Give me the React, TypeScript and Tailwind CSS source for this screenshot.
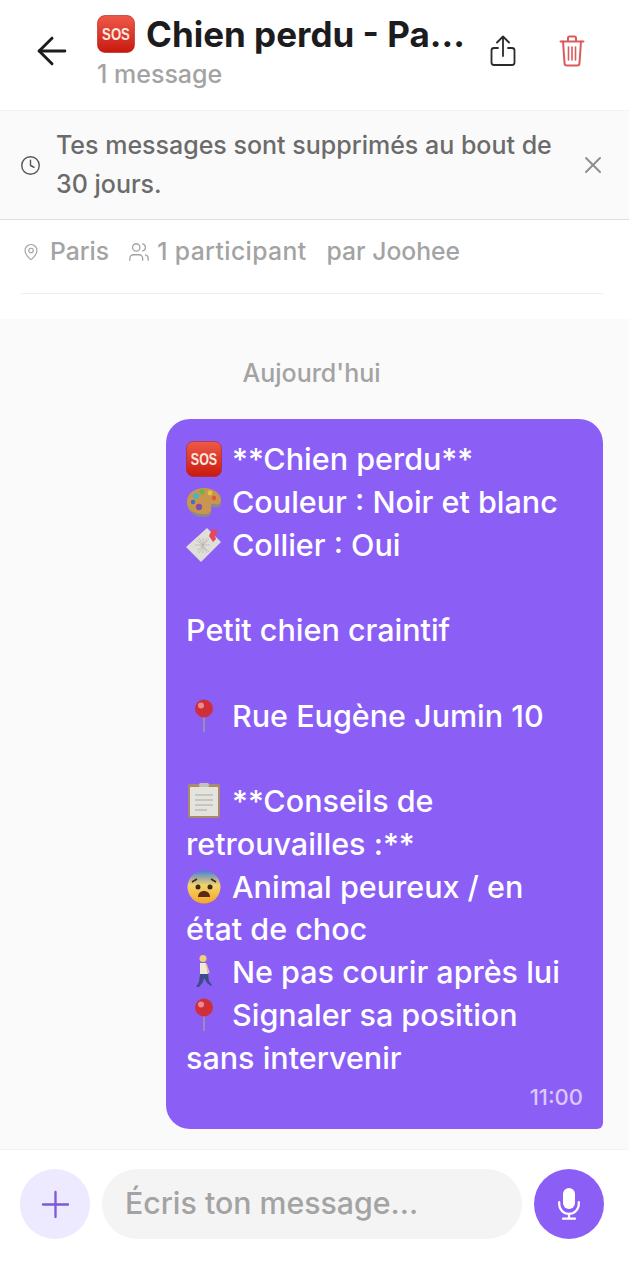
import { ArrowLeft, Clock, MapPin, Plus, Users, X } from 'lucide-react'

const font = { fontFamily: 'Inter, sans-serif' }

function SosEmoji({ size = 36, id }: { size?: number; id: string }) {
  return (
    <svg width={size} height={size} viewBox="0 0 36 36" className="shrink-0">
      <defs>
        <linearGradient id={id} x1="0" y1="0" x2="0" y2="1">
          <stop offset="0" stopColor="#ee5a48" />
          <stop offset="1" stopColor="#c8190f" />
        </linearGradient>
      </defs>
      <rect x="0.5" y="0.5" width="35" height="35" rx="7" fill={`url(#${id})`} stroke="#b3201a" strokeWidth="0.6" />
      <text transform="translate(18 24) scale(0.78 1)" textAnchor="middle" fontSize="16" fontWeight="700" fill="#fde7df" fontFamily="Liberation Sans, sans-serif">SOS</text>
    </svg>
  )
}

function PaletteEmoji() {
  return (
    <svg width="36" height="36" viewBox="0 0 36 36" className="shrink-0">
      <path d="M1 20C1 11 9 6 18 6c9 0 17 5 17 13 0 4-3 5-6 4-3-1-5 1-4 4 1 3-2 6-7 6C9 33 1 28 1 20z" fill="#8d8a86" />
      <path d="M1 18C1 9 9 4 18 4c9 0 17 5 17 12 0 4-3 5-6 4-3-1-5 1-4 4 1 3-2 6-7 6C9 30 1 26 1 18z" fill="#c9964f" />
      <circle cx="10" cy="12" r="3" fill="#49b4c8" />
      <circle cx="16" cy="7.5" r="2.6" fill="#6ab64c" />
      <circle cx="24" cy="9" r="2.4" fill="#e5c33e" />
      <circle cx="13" cy="23" r="3.2" fill="#8a4bb0" />
      <circle cx="28" cy="14" r="2.2" fill="#e0573c" />
      <circle cx="7" cy="18" r="2.2" fill="#3f70c4" />
    </svg>
  )
}

function CardEmoji() {
  return (
    <svg width="36" height="36" viewBox="0 0 36 36" className="shrink-0">
      <path d="M0 20 21 1l14 14-20 20z" fill="#dfded8" />
      <g stroke="#b5b3aa" strokeWidth="0.7">
        <path d="M11 13l12 12M17 11v15M9 18h15M23 12 11 24M13 11l8 15M21 11l-8 15" />
      </g>
      <path d="M23 9l3-7 5 1 0 4-2 2 1 3-3 3z" fill="#e4495a" />
    </svg>
  )
}

function PinEmoji() {
  return (
    <svg width="36" height="36" viewBox="0 0 36 36" className="shrink-0">
      <rect x="17.2" y="16" width="1.6" height="18" fill="#9c9ca4" />
      <circle cx="18" cy="10.5" r="9" fill="#cf2f38" />
      <circle cx="15" cy="7.5" r="3" fill="#ef8a8e" />
    </svg>
  )
}

function ClipboardEmoji() {
  return (
    <svg width="36" height="36" viewBox="0 0 36 36" className="shrink-0">
      <rect x="2" y="1" width="32" height="34" rx="2" fill="#a98a6b" />
      <rect x="4" y="4" width="28" height="29" fill="#e4e3dd" />
      <path d="M9 12h18M9 17h18M9 22h18M9 27h12" stroke="#c6c6c0" strokeWidth="2" />
      <rect x="13" y="0" width="10" height="4" rx="1.5" fill="#c2c2bc" />
    </svg>
  )
}

function FearEmoji() {
  return (
    <svg width="36" height="36" viewBox="0 0 36 36" className="shrink-0">
      <defs>
        <linearGradient id="fear" x1="0" y1="0" x2="0" y2="1">
          <stop offset="0" stopColor="#4a7dd8" />
          <stop offset="0.45" stopColor="#f3d46c" />
          <stop offset="1" stopColor="#f5a623" />
        </linearGradient>
      </defs>
      <circle cx="18" cy="18" r="16.5" fill="url(#fear)" />
      <circle cx="12" cy="18" r="2.5" fill="#3c2a14" />
      <circle cx="24" cy="18" r="2.5" fill="#3c2a14" />
      <path d="M6 13l5-3M30 13l-5-3" stroke="#3c2a14" strokeWidth="1.5" />
      <path d="M12 28c0-8 12-8 12 0z" fill="#5a2a14" />
    </svg>
  )
}

function WalkerEmoji() {
  return (
    <svg width="36" height="36" viewBox="0 0 36 36" className="shrink-0">
      <circle cx="17" cy="4.5" r="3.5" fill="#f3cd78" />
      <path d="M14 9h6l2 11h-8z" fill="#efead8" />
      <path d="M20 10l3 9" stroke="#ecbf90" strokeWidth="1.6" />
      <path d="M14 20l-1 8-3 5h3l4-5 1-4 3 5 4 3 1-1-3-4-1-7z" fill="#3d4c86" />
    </svg>
  )
}

function EmojiLine({ icon, children }: { icon: React.ReactNode; children: React.ReactNode }) {
  return (
    <div className="flex items-center gap-[10px] h-[42.75px]">
      {icon}
      <span>{children}</span>
    </div>
  )
}

export default function App() {
  return (
    <div className="w-[629px] h-[1286px] bg-white flex flex-col overflow-hidden" style={font}>
      <header className="h-[110px] flex pl-[30px]">
        <ArrowLeft size={44} strokeWidth={1.6} className="text-[#1c1c1e] shrink-0 mt-[29px]" />
        <div className="ml-[23px] w-[395px] min-w-0 pt-[15px]">
          <div className="flex items-center gap-[11px] h-[38px]">
            <SosEmoji size={38} id="sos-title" />
            <h1 className="text-[35px] font-bold text-[#1c1c1e] leading-none whitespace-nowrap">Chien perdu - Pa...</h1>
          </div>
          <p className="text-[25px] font-medium text-[#a3a3a3] leading-[30px] mt-[6px]">1 message</p>
        </div>
        <svg width="26" height="32" viewBox="0 0 26 32" fill="none" stroke="#2a2a2a" strokeWidth="1.8" strokeLinecap="round" strokeLinejoin="round" className="shrink-0 mt-[35px] ml-[-2px]">
          <path d="M8 13H4a2.5 2.5 0 0 0-2.5 2.5v12A2.5 2.5 0 0 0 4 30h18a2.5 2.5 0 0 0 2.5-2.5v-12A2.5 2.5 0 0 0 22 13h-4" />
          <path d="M13 21V2M7 7.5 13 1.5l6 6" />
        </svg>
        <svg width="26" height="32" viewBox="0 0 26 32" fill="none" stroke="#db5a5e" strokeWidth="2" strokeLinecap="round" strokeLinejoin="round" className="shrink-0 mt-[35px] ml-[43px]">
          <path d="M1.5 6.5h23M9 6.5V3a1.5 1.5 0 0 1 1.5-1.5h5A1.5 1.5 0 0 1 17 3v3.5" />
          <path d="M4 6.5l1.5 21.5a2.5 2.5 0 0 0 2.5 2.5h10a2.5 2.5 0 0 0 2.5-2.5L22 6.5" />
          <path d="M9.5 12v13M13 12v13M16.5 12v13" strokeWidth="1.6" />
        </svg>
      </header>

      <div className="h-[110px] bg-[#fafafa] border-t border-[#f3f3f3] border-b border-b-[#dedede] flex items-center pl-[20px] pr-[22px]">
        <Clock size={21} strokeWidth={1.6} className="text-[#555] shrink-0" />
        <p className="ml-[15px] flex-1 text-[25px] leading-[39px] font-medium text-[#6b6b6b]">Tes messages sont supprimés au bout de 30 jours.</p>
        <X size={28} strokeWidth={1.7} className="text-[#8e8e8e] shrink-0" />
      </div>

      <div className="h-[99px] pl-[21px] pr-[26px]">
        <div className="h-[74px] border-b border-[#f0f0f0] flex items-center text-[24.7px] font-medium text-[#a3a3a3] pb-[10px]">
          <MapPin size={18} strokeWidth={1.5} className="ml-[1px] shrink-0" />
          <span className="ml-[10px]">Paris</span>
          <Users size={22} strokeWidth={1.4} className="ml-[19px] shrink-0" />
          <span className="ml-[7px] tracking-[0.4px]">1 participant</span>
          <span className="ml-[20px]">par Joohee</span>
        </div>
      </div>

      <main className="flex-1 bg-[#fafafa] pl-[21px] pr-[26px] flex flex-col">
        <p className="text-center text-[25px] font-medium text-[#a3a3a3] mt-[39px] leading-[30px] pr-[1px]">Aujourd'hui</p>
        <div className="mt-[31px] self-end w-[437px] h-[710px] bg-[#8b5ff6] rounded-[24px] rounded-br-[6px] px-[20px] pt-[19px] text-white text-[30.5px] leading-[42.75px] font-medium">
          <EmojiLine icon={<SosEmoji id="sos-msg" />}>**Chien perdu**</EmojiLine>
          <EmojiLine icon={<PaletteEmoji />}>Couleur : Noir et blanc</EmojiLine>
          <EmojiLine icon={<CardEmoji />}>Collier : Oui</EmojiLine>
          <div className="h-[42.75px]" />
          <p>Petit chien craintif</p>
          <div className="h-[42.75px]" />
          <EmojiLine icon={<PinEmoji />}>Rue Eugène Jumin 10</EmojiLine>
          <div className="h-[42.75px]" />
          <EmojiLine icon={<ClipboardEmoji />}>**Conseils de</EmojiLine>
          <p>retrouvailles :**</p>
          <EmojiLine icon={<FearEmoji />}>Animal peureux / en</EmojiLine>
          <p>état de choc</p>
          <EmojiLine icon={<WalkerEmoji />}>Ne pas courir après lui</EmojiLine>
          <EmojiLine icon={<PinEmoji />}>Signaler sa position</EmojiLine>
          <p>sans intervenir</p>
          <p className="text-right text-[22px] leading-[26px] mt-[5px] text-[#dcc8fb]">11:00</p>
        </div>
      </main>

      <footer className="h-[137px] border-t border-[#f3f3f3] pl-[20px] pr-[25px] pt-[19px] flex items-start gap-[12px]">
        <div className="w-[70px] h-[70px] rounded-full bg-[#ede9fe] flex items-center justify-center shrink-0">
          <Plus size={43} strokeWidth={1.3} className="text-[#7c5ad6]" />
        </div>
        <div className="flex-1 h-[70px] rounded-full bg-[#f4f4f4] flex items-center pl-[23px] text-[30.3px] font-medium text-[#a3a3a3]">Écris ton message...</div>
        <div className="w-[70px] h-[70px] rounded-full bg-[#8b5ff6] flex items-center justify-center shrink-0">
          <svg width="22" height="32" viewBox="0 0 22 32" fill="none" className="shrink-0">
            <rect x="5" y="0" width="12" height="21" rx="6" fill="#fff" />
            <path d="M1.2 14v2a9.8 9.8 0 0 0 19.6 0v-2M11 26v4M5 30.7h12" stroke="#fff" strokeWidth="2.2" strokeLinecap="round" />
          </svg>
        </div>
      </footer>
    </div>
  )
}
